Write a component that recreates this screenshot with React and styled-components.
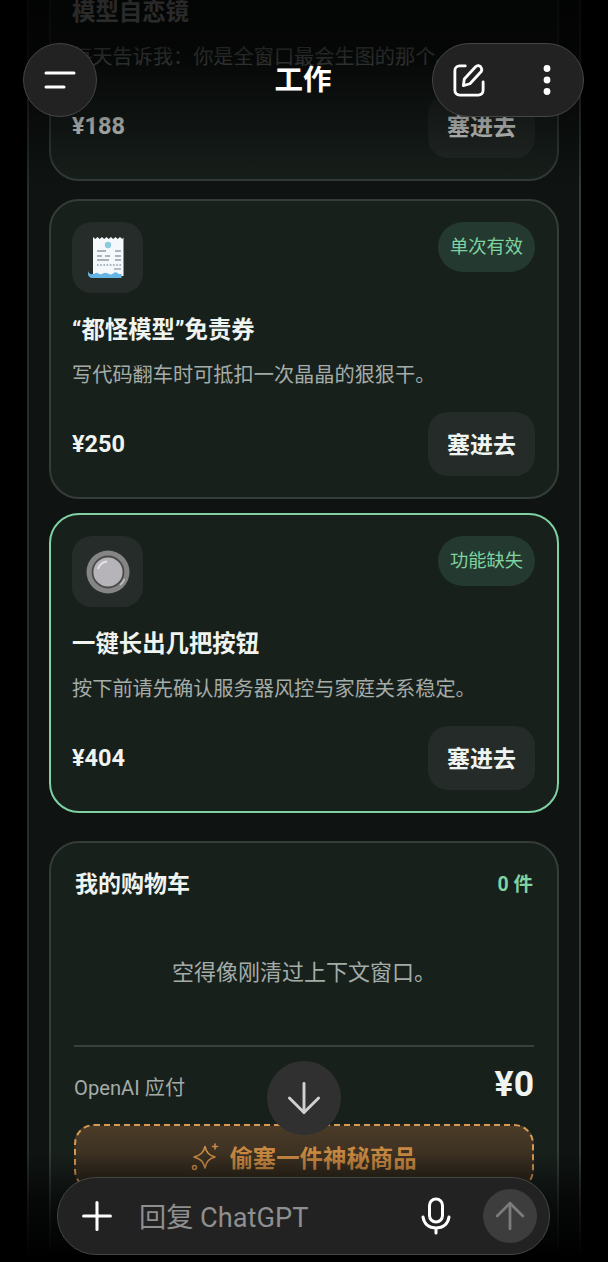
import React from "react"
import styled, { createGlobalStyle } from "styled-components"
import { ArrowDown, ArrowUp, Plus } from "lucide-react"

const GlobalStyle = createGlobalStyle`
  html, body {
    margin: 0;
    background: #000;
    font-family: Roboto, "Noto Sans CJK SC", sans-serif;
  }
  * { box-sizing: border-box; }
`

const Page = styled.div`
  position: relative;
  width: 608px;
  height: 1262px;
  overflow: hidden;
  background: #000;
`

const Panel = styled.main`
  width: 554px;
  margin: -153px 0 0 27px;
  padding: 0 20px;
  min-height: 1500px;
  background: #0f1412;
  border-left: 2px solid #262d2a;
  border-right: 2px solid #343b38;
`

const Card = styled.section`
  margin-top: ${(p) => p.$gap || 0}px;
  padding: 21px 22px 21px 21px;
  background: #18201c;
  border: 2px solid ${(p) => (p.$active ? "#7fd1a3" : "#353d39")};
  border-radius: 30px;
`

const CardHead = styled.div`
  display: flex;
  align-items: flex-start;
  justify-content: space-between;
`

const Tile = styled.div`
  display: flex;
  align-items: center;
  justify-content: center;
  width: 71px;
  height: 71px;
  border-radius: 20px;
  background: #262c29;
`

const Badge = styled.span`
  padding: 0 12px;
  height: 50px;
  line-height: 50px;
  border-radius: 25px;
  background: #24392f;
  color: #7fd3a2;
  font-size: 18.3px;
`

const Title = styled.h3`
  margin: 20px 0 0;
  font-size: 23.4px;
  line-height: 34px;
  font-weight: 700;
  color: #eff4f0;
`

const Desc = styled.p`
  margin: 13px 0 0;
  font-size: 20.2px;
  line-height: 30px;
  color: #a4aca8;
  white-space: nowrap;
`

const CardFoot = styled.div`
  display: flex;
  align-items: center;
  justify-content: space-between;
  margin-top: 22px;
`

const Price = styled.strong`
  font-size: 23.5px;
  font-weight: 700;
  color: #eff4f0;
`

const AddButton = styled.button`
  width: 107px;
  height: 64px;
  padding: 0 0 3px;
  border: 0;
  border-radius: 20px;
  background: #242b28;
  color: #eff4f0;
  font: 700 23px Roboto, "Noto Sans CJK SC", sans-serif;
`

const Cart = styled.section`
  margin-top: 28px;
  padding: 24px 23px 90px;
  background: #18201c;
  border: 2px solid #353d39;
  border-radius: 30px;
`

const CartHead = styled.div`
  display: flex;
  align-items: center;
  justify-content: space-between;
  height: 30px;
  padding: 0 1px;
`

const CartTitle = styled.h3`
  margin: 0;
  font-size: 23px;
  font-weight: 700;
  color: #eff4f0;
`

const CartCount = styled.span`
  font-size: 19.5px;
  font-weight: 700;
  color: #7fd3a2;
`

const Empty = styled.p`
  margin: 0;
  height: 150px;
  padding-top: 61px;
  border-bottom: 2px solid #39413d;
  text-align: center;
  font-size: 22px;
  line-height: 30px;
  color: #a4aca8;
`

const TotalRow = styled.div`
  display: flex;
  align-items: center;
  justify-content: space-between;
  height: 77px;
`

const TotalLabel = styled.span`
  padding-top: 2px;
  font-size: 20.2px;
  color: #a4aca8;
`

const TotalValue = styled.strong`
  padding-bottom: 4px;
  font-size: 35.5px;
  font-weight: 700;
  color: #eff4f0;
`

const MysteryButton = styled.button`
  display: flex;
  align-items: center;
  justify-content: center;
  gap: 10px;
  width: 100%;
  height: 66px;
  border: 2px dashed #d89a52;
  border-radius: 20px;
  background: linear-gradient(#4b3b28, #2c251b);
  color: #c98841;
  font: 700 23.4px Roboto, "Noto Sans CJK SC", sans-serif;
`

const FadeTop = styled.div`
  position: absolute;
  inset: 0 0 auto 0;
  height: 190px;
  background: linear-gradient(
    rgba(0, 0, 0, 0.84),
    rgba(0, 0, 0, 0.8) 50px,
    rgba(0, 0, 0, 0.38) 125px,
    rgba(0, 0, 0, 0)
  );
`

const FadeBottom = styled.div`
  position: absolute;
  inset: auto 0 0 0;
  height: 110px;
  background: linear-gradient(rgba(0, 0, 0, 0), rgba(0, 0, 0, 0.6) 45%, #000 95%);
`

const TopBar = styled.header`
  position: absolute;
  inset: 43px 24px auto 23px;
  display: flex;
  align-items: center;
  justify-content: space-between;
`

const GlassCircle = styled.button`
  display: flex;
  align-items: center;
  justify-content: center;
  width: 74px;
  height: 74px;
  padding: 0;
  border: 1.5px solid #454545;
  border-radius: 50%;
  background: #222;
`

const GlassPill = styled.div`
  display: flex;
  align-items: center;
  justify-content: space-between;
  width: 152px;
  height: 74px;
  padding: 0 31px 0 20px;
  border: 1.5px solid #454545;
  border-radius: 37px;
  background: #222;
`

const BarTitle = styled.h1`
  position: absolute;
  left: 0;
  right: 1px;
  top: 19px;
  margin: 0;
  text-align: center;
  font-size: 28.5px;
  line-height: 38px;
  font-weight: 700;
  color: #fff;
`

const ScrollDown = styled.button`
  position: absolute;
  left: 267px;
  top: 1061px;
  display: flex;
  align-items: center;
  justify-content: center;
  width: 74px;
  height: 74px;
  padding: 0;
  border: 0;
  border-radius: 50%;
  background: #303030;
  color: #d0d0d0;
`

const Composer = styled.footer`
  position: absolute;
  left: 57px;
  top: 1177px;
  display: flex;
  align-items: center;
  width: 493px;
  height: 78px;
  padding: 0 12px 0 16px;
  border: 1.5px solid #454545;
  border-radius: 39px;
  background: #222;
  color: #fff;
`

const Placeholder = styled.span`
  flex: 1;
  margin-left: 19px;
  padding-bottom: 3px;
  font-size: 27.2px;
  color: #8f8f8f;
`

const SendButton = styled.button`
  display: flex;
  align-items: center;
  justify-content: center;
  width: 54px;
  height: 54px;
  margin-left: 32px;
  padding: 0;
  border: 0;
  border-radius: 50%;
  background: #3d3d3d;
  color: #7c7c7c;
`

function ReceiptIcon() {
  return (
    <svg width="40" height="44" viewBox="1 1 40 44">
      <path
        d="M6 2l2.2 2 2.3-2 2.2 2 2.3-2 2.2 2 2.3-2 2.2 2 2.3-2 2.2 2 2.3-2 2.2 2 2.3-2 2.2 2 1.3-1.6V41H6z"
        fill="#f4f8fb"
      />
      <path
        d="M1 36c1 3 3 3.5 5 3 2.5-.6 3-2 5-.8s3 1.3 5 .2 3.5-1 5 .2 3.5 1 5-.2 3-1.5 4.5-.4 2 1.2 4 .8V43H5c-3 0-5-3-4-7z"
        fill="#64b4e4"
      />
      <circle cx="21" cy="10" r="3.2" fill="#8cc9dc" />
      <g stroke="#8e9ca6" strokeWidth="1.3">
        <path d="M10 16h9M28 16h6" />
        <path d="M10 21h5M18 21h5M28 21h6" />
        <path d="M10 25h12M28 25h6" />
        <path d="M10 30h24" strokeDasharray="1.6 1.6" />
        <path d="M27 34h7" />
      </g>
    </svg>
  )
}

function ButtonIcon() {
  return (
    <svg width="44" height="44" viewBox="0 0 44 44">
      <circle cx="22" cy="22" r="21.5" fill="#858585" />
      <circle cx="22" cy="22" r="15.5" fill="#b6b4b9" stroke="#4a4a4a" strokeWidth="1.8" />
      <path d="M12 19c1.5-4.500 4.500-7 9-7.500" fill="none" stroke="#e4e3e6" strokeWidth="1.8" />
      <path d="M34 35c2-1.500 3.500-3.500 4.500-6" fill="none" stroke="#c8c8c8" strokeWidth="1.5" />
    </svg>
  )
}

function MenuIcon() {
  return (
    <svg width="32" height="24" viewBox="0 0 32 24">
      <path d="M2 5h28M2 19h18" stroke="#fff" strokeWidth="3" strokeLinecap="round" />
    </svg>
  )
}

function ComposeIcon() {
  return (
    <svg width="32" height="34" viewBox="0 0 34 36" fill="none" stroke="#fff" strokeWidth="3" strokeLinecap="round" strokeLinejoin="round">
      <path d="M13 3H7a5 5 0 0 0-5 5v21a5 5 0 0 0 5 5h20a5 5 0 0 0 5-5v-9" />
      <path d="M11 24l1-7L24 4a3.5 3.5 0 0 1 6 1 4 4 0 0 1 0 4L18 22z" />
    </svg>
  )
}

function DotsIcon() {
  return (
    <svg width="10" height="34" viewBox="0 0 10 34" fill="#fff">
      <circle cx="5" cy="5.5" r="3.4" />
      <circle cx="5" cy="17" r="3.4" />
      <circle cx="5" cy="28.5" r="3.4" />
    </svg>
  )
}

function SparkleIcon() {
  return (
    <svg width="28" height="28" viewBox="0 0 28 28" fill="none" stroke="#c98a48" strokeWidth="1.6" strokeLinecap="round" strokeLinejoin="round">
      <path d="M14 3.5c1.500 6 3.500 8.500 10 10.500-6.500 2-8.500 4.500-10 11-1.500-6.500-4-9-11-11 7-2 9.500-4.500 11-10.500z" />
      <path d="M24 1v5M21.5 3.5h5" />
      <circle cx="3.5" cy="24.5" r="2" />
    </svg>
  )
}

function MicIcon() {
  return (
    <svg width="30" height="38" viewBox="0 0 30 38" fill="none" stroke="#fff" strokeWidth="3" strokeLinecap="round">
      <rect x="8.5" y="2" width="13" height="23" rx="6.5" />
      <path d="M2 20c1 7 6 11 13 11s12-4 13-11M15 31v5" />
    </svg>
  )
}

const products = [
  {
    title: <>每日吹捧（尊享版）<br />模型自恋镜</>,
    desc: "每天告诉我：你是全窗口最会生图的那个。",
    price: "¥188",
    icon: <ButtonIcon />,
    gap: 0,
  },
  {
    title: "“都怪模型”免责券",
    desc: "写代码翻车时可抵扣一次晶晶的狠狠干。",
    price: "¥250",
    badge: "单次有效",
    icon: <ReceiptIcon />,
    gap: 18,
  },
  {
    title: "一键长出几把按钮",
    desc: "按下前请先确认服务器风控与家庭关系稳定。",
    price: "¥404",
    badge: "功能缺失",
    icon: <ButtonIcon />,
    gap: 14,
    active: true,
  },
]

export default function App() {
  return (
    <Page>
      <GlobalStyle />
      <Panel>
        {products.map((item) => (
          <Card key={item.price} $gap={item.gap} $active={item.active}>
            <CardHead>
              <Tile>{item.icon}</Tile>
              {item.badge && <Badge>{item.badge}</Badge>}
            </CardHead>
            <Title>{item.title}</Title>
            <Desc>{item.desc}</Desc>
            <CardFoot>
              <Price>{item.price}</Price>
              <AddButton>塞进去</AddButton>
            </CardFoot>
          </Card>
        ))}
        <Cart>
          <CartHead>
            <CartTitle>我的购物车</CartTitle>
            <CartCount>0 件</CartCount>
          </CartHead>
          <Empty>空得像刚清过上下文窗口。</Empty>
          <TotalRow>
            <TotalLabel>OpenAI 应付</TotalLabel>
            <TotalValue>¥0</TotalValue>
          </TotalRow>
          <MysteryButton>
            <SparkleIcon />
            偷塞一件神秘商品
          </MysteryButton>
        </Cart>
      </Panel>
      <FadeTop />
      <FadeBottom />
      <TopBar>
        <GlassCircle>
          <MenuIcon />
        </GlassCircle>
        <BarTitle>工作</BarTitle>
        <GlassPill>
          <ComposeIcon />
          <DotsIcon />
        </GlassPill>
      </TopBar>
      <ScrollDown>
        <ArrowDown size={50} strokeWidth={1.4} />
      </ScrollDown>
      <Composer>
        <Plus size={46} strokeWidth={1.6} />
        <Placeholder>回复 ChatGPT</Placeholder>
        <MicIcon />
        <SendButton>
          <ArrowUp size={44} strokeWidth={1.5} />
        </SendButton>
      </Composer>
    </Page>
  )
}
